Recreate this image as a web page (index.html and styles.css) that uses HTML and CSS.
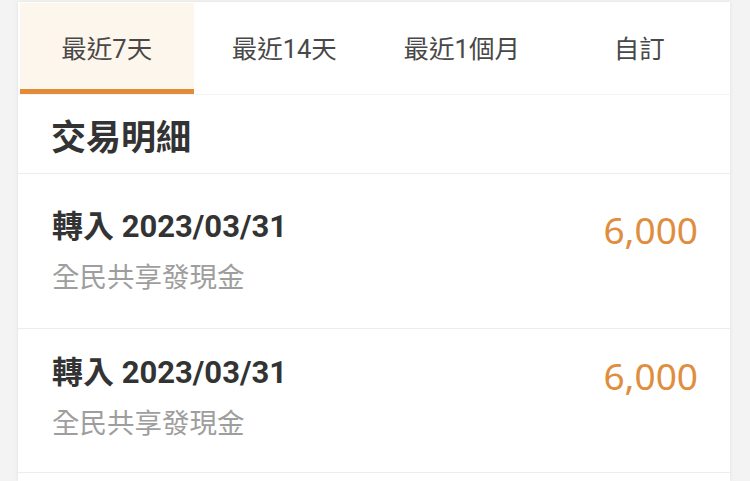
FILE: index.html
```html
<!DOCTYPE html>
<html lang="zh-Hant">
<head>
<meta charset="utf-8">
<link rel="stylesheet" href="styles.css">
</head>
<body>
<div class="card">
  <div class="tabs">
    <div class="tab active">最近7天</div>
    <div class="tab">最近14天</div>
    <div class="tab">最近1個月</div>
    <div class="tab">自訂</div>
  </div>
  <div class="section-head">交易明細</div>
  <div class="list">
    <div class="row first">
      <div class="info">
        <div class="title">轉入 2023/03/31</div>
        <div class="sub">全民共享發現金</div>
      </div>
      <div class="amount">6,000</div>
    </div>
    <div class="row">
      <div class="info">
        <div class="title">轉入 2023/03/31</div>
        <div class="sub">全民共享發現金</div>
      </div>
      <div class="amount">6,000</div>
    </div>
    <div class="row tail"></div>
  </div>
</div>
</body>
</html>
```
FILE: styles.css
```css
html, body {
  margin: 0;
  padding: 0;
}
body {
  background: #f3f3f3;
  font-family: "Roboto", "Noto Sans CJK TC", sans-serif;
  height: 481px;
  overflow: hidden;
}
.card {
  margin: 2px 0 0 18px;
  width: 712px;
  background: #fff;
  box-shadow: 0 0 4px rgba(0,0,0,0.08);
}
.tabs {
  display: grid;
  grid-template-columns: repeat(4, 177.5px);
  border-bottom: 1px solid #f4f4f4;
}
.tab {
  height: 86px;
  margin: 1px 2px 0;
  display: flex;
  align-items: center;
  justify-content: center;
  font-size: 25.5px;
  color: #484848;
  border-bottom: 5px solid transparent;
  font-family: "Roboto", "Noto Sans CJK TC", sans-serif;
}
.tab.active {
  background: #fdf6ec;
  border-bottom-color: #e38b36;
}
.section-head {
  height: 78px;
  display: flex;
  align-items: center;
  padding-left: 33px;
  font-size: 35px;
  font-weight: 700;
  color: #333;
  border-bottom: 1px solid #ececec;
  font-family: "Noto Sans CJK TC", sans-serif;
}
.row {
  display: flex;
  align-items: flex-start;
  justify-content: space-between;
  padding: 22px 32px 0 34px;
  height: 121px;
  border-bottom: 1px solid #ececec;
}
.row.first {
  padding-top: 31px;
  height: 123px;
}
.row.tail {
  height: 8px;
  padding: 0;
  border-bottom: none;
}
.title {
  font-size: 31px;
  font-weight: 700;
  color: #333;
  line-height: 44px;
}
.sub {
  font-size: 27.5px;
  color: #9e9e9e;
  line-height: 40px;
  margin-top: 6px;
  font-family: "Noto Sans CJK TC", sans-serif;
}
.amount {
  font-family: "Noto Sans", "Open Sans", sans-serif;
  font-size: 37px;
  color: #e08d3e;
  line-height: 50px;
  margin-top: 0;
}
```
